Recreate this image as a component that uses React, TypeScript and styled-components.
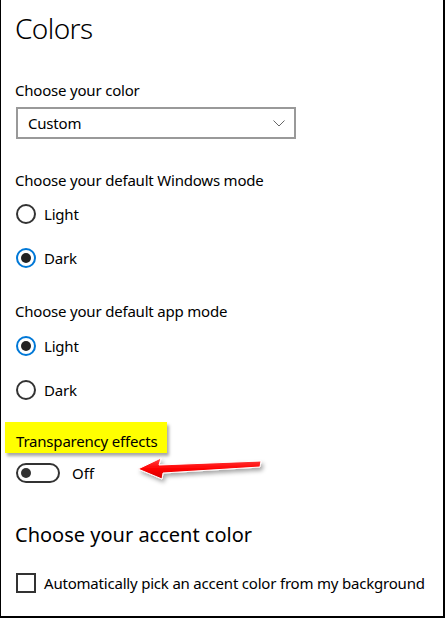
import React from 'react'
import styled, {createGlobalStyle} from 'styled-components'

const GlobalStyle = createGlobalStyle`
  html, body {
    margin: 0;
    padding: 0;
    background: #ffffff;
  }
  body {
    font-family: 'Noto Sans', 'Open Sans', sans-serif;
    color: #000000;
  }
`

const Frame = styled.div`
  position: relative;
  box-sizing: border-box;
  width: 445px;
  height: 618px;
  border-left: 1px solid #000000;
  border-right: 2px solid #000000;
  border-bottom: 2px solid #000000;
  padding-left: 14px;
  display: flex;
  flex-direction: column;
  overflow: hidden;
`

const Row = styled.div<{$top: number; $height: number}>`
  display: flex;
  align-items: center;
  margin-top: ${(p) => p.$top}px;
  height: ${(p) => p.$height}px;
  flex-shrink: 0;
`

const PageTitle = styled.h1`
  margin: 0;
  font-size: 28px;
  font-weight: 300;
  line-height: 1;
  letter-spacing: -0.6px;
`

const SectionLabel = styled.div`
  font-size: 15px;
  line-height: 1;
  letter-spacing: -0.2px;
`

const SubHeading = styled.h2`
  margin: 0;
  font-size: 20px;
  font-weight: 400;
  line-height: 1;
`

const Select = styled.div`
  box-sizing: border-box;
  width: 280px;
  height: 32px;
  margin-top: 3px;
  margin-left: 1px;
  border: 2px solid #999999;
  display: flex;
  align-items: center;
  justify-content: space-between;
  padding: 0 9px 0 10px;
  font-size: 15px;
  letter-spacing: -0.2px;
  flex-shrink: 0;
`

const RadioCircle = styled.span<{$checked?: boolean}>`
  box-sizing: border-box;
  width: 20px;
  height: 20px;
  margin-left: 1px;
  border-radius: 50%;
  border: 2px solid ${(p) => (p.$checked ? '#0078d7' : '#333333')};
  display: flex;
  align-items: center;
  justify-content: center;
  flex-shrink: 0;

  &::after {
    content: '';
    display: ${(p) => (p.$checked ? 'block' : 'none')};
    width: 10px;
    height: 10px;
    border-radius: 50%;
    background: #222222;
  }
`

const OptionText = styled.span`
  margin-left: 8px;
  font-size: 15px;
  line-height: 1;
  letter-spacing: -0.2px;
`

const Highlight = styled.div`
  box-sizing: border-box;
  margin-left: -10px;
  margin-top: 18px;
  width: 162px;
  height: 31px;
  background: #ffff00;
  box-shadow: 2px 3px 3px rgba(0, 0, 0, 0.35);
  padding: 12px 0 0 11px;
  font-size: 15px;
  line-height: 1;
  letter-spacing: -0.2px;
  flex-shrink: 0;
`

const Toggle = styled.span`
  box-sizing: border-box;
  width: 44px;
  height: 20px;
  margin-left: 1px;
  border: 2px solid #333333;
  border-radius: 10px;
  display: flex;
  align-items: center;
  padding-left: 3px;
  flex-shrink: 0;

  &::after {
    content: '';
    width: 10px;
    height: 10px;
    border-radius: 50%;
    background: #333333;
  }
`

const ToggleText = styled.span`
  margin-left: 12px;
  font-size: 15px;
  line-height: 1;
`

const CheckBox = styled.span`
  box-sizing: border-box;
  width: 20px;
  height: 20px;
  margin-left: 1px;
  border: 2px solid #333333;
  flex-shrink: 0;
`

const ArrowMark = styled.svg`
  position: absolute;
  left: 130px;
  top: 448px;
  width: 140px;
  height: 42px;
  pointer-events: none;
`

function Radio(props: {label: string; checked?: boolean; top: number}) {
  return (
    <Row $top={props.top} $height={28}>
      <RadioCircle $checked={props.checked} />
      <OptionText>{props.label}</OptionText>
    </Row>
  )
}

function Chevron() {
  return (
    <svg width="12" height="7" viewBox="0 0 12 7">
      <path d="M0.5 0.5 L6 6 L11.5 0.5" fill="none" stroke="#666666" strokeWidth="1" />
    </svg>
  )
}

function Arrow() {
  return (
    <ArrowMark viewBox="0 0 140 42">
      <defs>
        <linearGradient id="arrowFill" x1="0" y1="0" x2="0" y2="1">
          <stop offset="0" stopColor="#ff4a4a" />
          <stop offset="0.5" stopColor="#ff0000" />
          <stop offset="1" stopColor="#d40000" />
        </linearGradient>
        <filter id="arrowShadow" x="-10%" y="-30%" width="130%" height="180%">
          <feDropShadow dx="2" dy="3" stdDeviation="2" floodColor="#000000" floodOpacity="0.35" />
        </filter>
      </defs>
      <path
        d="M7 21 L30 10 L28 17 L130 13 L129 19 L32 25 L31 31 Z"
        fill="url(#arrowFill)"
        stroke="#ffffff"
        strokeWidth="1"
        strokeLinejoin="round"
        filter="url(#arrowShadow)"
      />
    </ArrowMark>
  )
}

export default function App() {
  return (
    <>
      <GlobalStyle />
      <Frame>
        <Row $top={8} $height={40}>
          <PageTitle>Colors</PageTitle>
        </Row>
        <Row $top={28} $height={28}>
          <SectionLabel>Choose your color</SectionLabel>
        </Row>
        <Select>
          <span>Custom</span>
          <Chevron />
        </Select>
        <Row $top={27} $height={28}>
          <SectionLabel>Choose your default Windows mode</SectionLabel>
        </Row>
        <Radio label="Light" top={6} />
        <Radio label="Dark" checked top={16} />
        <Row $top={25} $height={28}>
          <SectionLabel>Choose your default app mode</SectionLabel>
        </Row>
        <Radio label="Light" checked top={7} />
        <Radio label="Dark" top={16} />
        <Highlight>Transparency effects</Highlight>
        <Row $top={10} $height={20}>
          <Toggle />
          <ToggleText>Off</ToggleText>
        </Row>
        <Row $top={36} $height={32}>
          <SubHeading>Choose your accent color</SubHeading>
        </Row>
        <Row $top={22} $height={20}>
          <CheckBox />
          <OptionText>Automatically pick an accent color from my background</OptionText>
        </Row>
        <Arrow />
      </Frame>
    </>
  )
}
